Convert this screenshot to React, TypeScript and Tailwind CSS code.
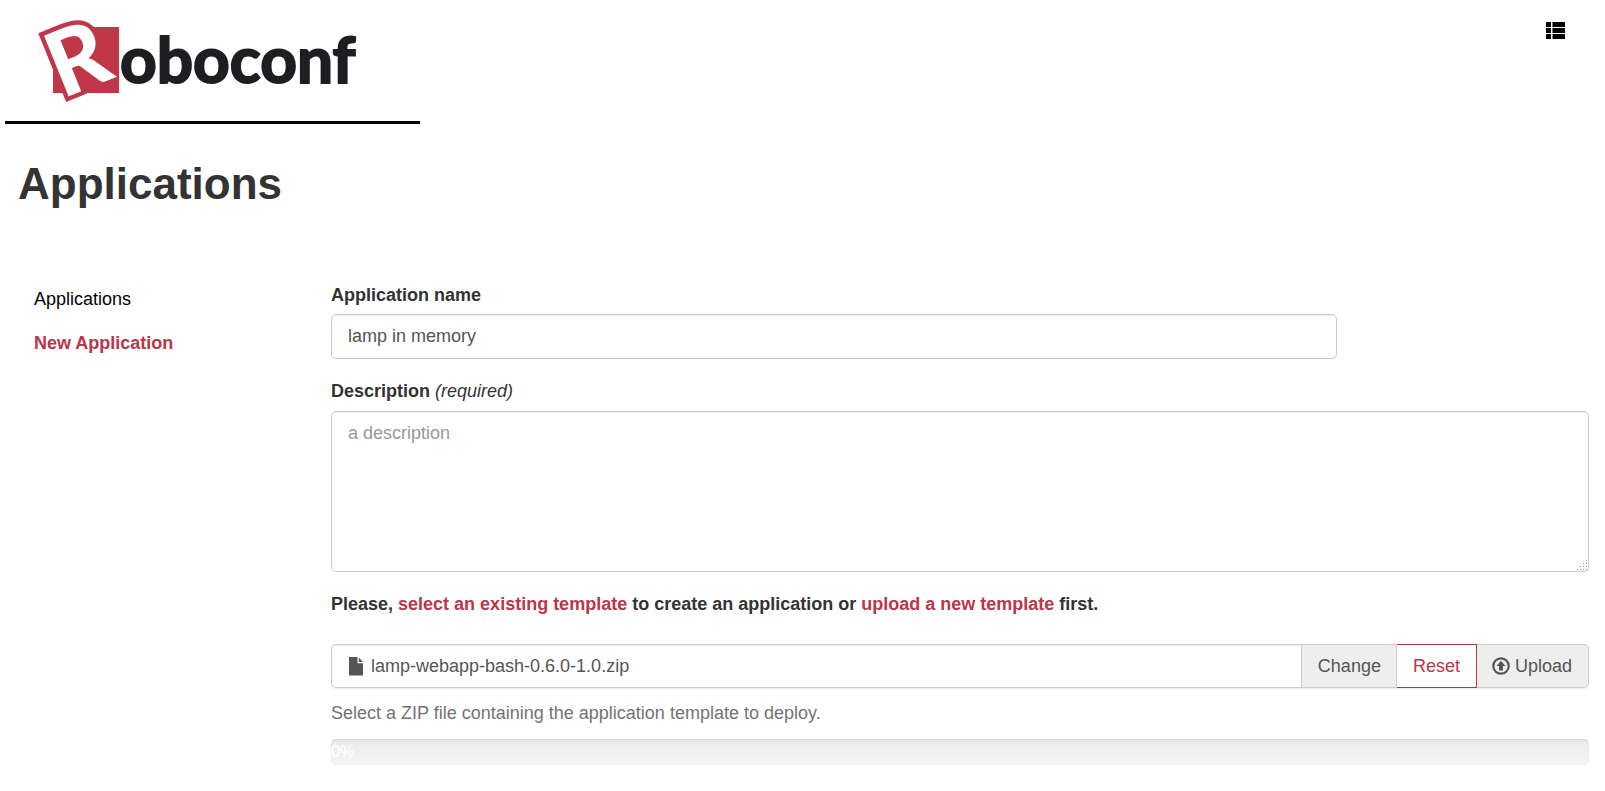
import React from "react";

function Logo() {
  return (
    <svg className="overflow-visible" width="330" height="96" viewBox="0 0 330 96" role="img" aria-label="Roboconf">
      <defs>
        <clipPath id="mark">
          <rect x="-10" y="-20" width="94" height="130" />
        </clipPath>
      </defs>
      <rect x="18" y="17" width="66" height="66" fill="#c1374a" />
      <g clipPath="url(#mark)">
        <g transform="rotate(-22 30 50)">
          <text
            x="13"
            y="85"
            fontFamily="Lato, sans-serif"
            fontWeight="900"
            fontSize="90"
            fill="#ffffff"
            stroke="#c1374a"
            strokeWidth="9"
            paintOrder="stroke"
          >
            R
          </text>
        </g>
      </g>
      <text
        x="85"
        y="73"
        fontFamily="Lato, sans-serif"
        fontWeight="700"
        fontSize="64"
        fill="#201d22"
        stroke="#201d22"
        strokeWidth="2"
      >
        oboconf
      </text>
    </svg>
  );
}

function ListIcon() {
  return (
    <svg width="20" height="18" viewBox="0 0 20 18" fill="#000000" aria-hidden="true">
      <path d="M0 0h5v5H0zM6.500 0H19v5H6.500zM0 6h5v5H0zM6.500 6H19v5H6.500zM0 12h5v5H0zM6.500 12H19v5H6.500z" />
    </svg>
  );
}

function FileIcon() {
  return (
    <svg width="15" height="19" viewBox="0 0 15 19" fill="#555555" aria-hidden="true">
      <path d="M0 0h8.500v6.200H14V18.500H0zM9.800 0.500L14 5H9.800z" />
    </svg>
  );
}

function UploadIcon() {
  return (
    <svg width="18" height="18" viewBox="0 0 18 18" aria-hidden="true">
      <circle cx="9" cy="9" r="7.700" fill="none" stroke="#555555" strokeWidth="2.200" />
      <path d="M9 3.800L13.500 9H11v4.500H7V9H4.500z" fill="#555555" />
    </svg>
  );
}

function ResizeGrip() {
  return (
    <svg
      className="pointer-events-none absolute right-0.5 bottom-0.5"
      width="10"
      height="10"
      viewBox="0 0 10 10"
      fill="#999999"
      aria-hidden="true"
    >
      <path d="M9 0h1v1H9zM6 3h1v1H6zM9 3h1v1H9zM3 6h1v1H3zM6 6h1v1H6zM9 6h1v1H9zM0 9h1v1H0zM3 9h1v1H3zM6 9h1v1H6zM9 9h1v1H9z" />
    </svg>
  );
}

const field =
  "block border border-[#cccccc] bg-white px-4 text-[#555555] shadow-[inset_0_1px_1px_rgba(0,0,0,0.075)] outline-none placeholder:text-[#999999]";

export default function App() {
  return (
    <div className="min-h-screen bg-white pb-6 font-['Liberation_Sans',Arial,sans-serif] text-lg leading-[26px] text-[#333333]">
      <header className="flex items-start justify-between pr-[39px] pl-[5px]">
        <a href="#home" className="block w-[415px] border-b-[3px] border-black pt-[10px] pb-[15px] pl-[30px]">
          <Logo />
        </a>
        <button type="button" aria-label="Menu" className="mt-[22px]">
          <ListIcon />
        </button>
      </header>

      <h1 className="mt-9 pl-[18px] text-[44px] leading-[48px] font-bold">Applications</h1>

      <div className="mt-[74px] flex items-start">
        <nav className="flex w-1/5 shrink-0 flex-col gap-[18px] pt-1 pl-[34px]">
          <a href="#applications" className="text-black">Applications</a>
          <a href="#new" className="font-bold text-[#ba3648]">New Application</a>
        </nav>

        <form className="min-w-0 flex-1 pr-4 pl-[10px]">
          <label htmlFor="name" className="block font-bold">Application name</label>
          <input id="name" type="text" defaultValue="lamp in memory" className={`${field} mt-[6px] h-[45px] w-4/5 rounded-[5px]`} />

          <label htmlFor="description" className="mt-[19px] block font-bold">
            Description <em className="font-normal">(required)</em>
          </label>
          <div className="relative mt-[7px]">
            <textarea
              id="description"
              placeholder="a description"
              className={`${field} h-[161px] w-full resize-y rounded-[5px] py-2 [&::-webkit-resizer]:hidden`}
            />
            <ResizeGrip />
          </div>

          <p className="mt-[19px] font-bold">
            Please, <a href="#select" className="text-[#ba3648]">select an existing template</a> to create an application or{" "}
            <a href="#upload" className="text-[#ba3648]">upload a new template</a> first.
          </p>

          <div className="mt-[27px] flex h-11 shadow-[0_1px_1px_rgba(0,0,0,0.05)]">
            <div className={`${field} min-w-0 flex-1 rounded-l-[5px] border-r-0`}>
              <div className="flex h-full items-center gap-[7px] pl-px">
                <FileIcon />
                <span>lamp-webapp-bash-0.6.0-1.0.zip</span>
              </div>
            </div>
            <button type="button" className="border border-[#cccccc] bg-[#eeeeee] pr-[15px] pl-4 text-[#555555]">Change</button>
            <button type="button" className="border border-l-0 border-[#b83547] bg-white px-4 text-[#ba3648]">Reset</button>
            <button
              type="button"
              className="flex items-center gap-[5px] rounded-r-[5px] border border-l-0 border-[#cccccc] bg-[#eeeeee] pr-4 pl-[15px] text-[#555555]"
            >
              <UploadIcon />
              Upload
            </button>
          </div>

          <p className="mt-3 text-[#737373]">Select a ZIP file containing the application template to deploy.</p>

          <div
            role="progressbar"
            aria-valuenow={0}
            aria-valuemin={0}
            aria-valuemax={100}
            aria-label="Upload progress"
            className="mt-[13px] h-[26px] rounded-[5px] bg-linear-to-b from-[#ebebeb] to-[#f5f5f5] text-base leading-[25px] text-white shadow-[inset_0_1px_2px_rgba(0,0,0,0.1)]"
          >
            0%
          </div>
        </form>
      </div>
    </div>
  );
}
